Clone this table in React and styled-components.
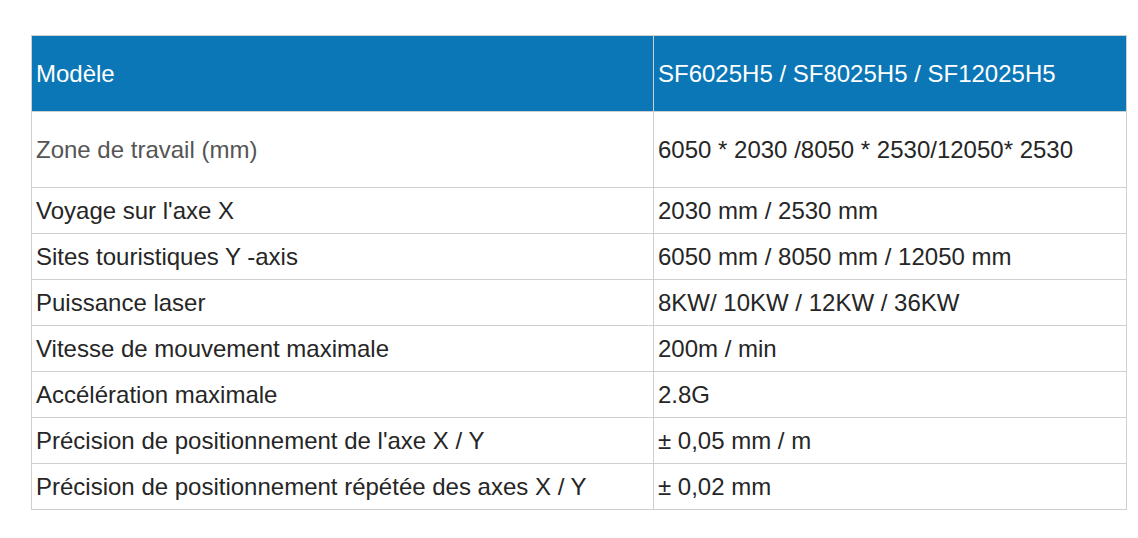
import styled, { createGlobalStyle } from 'styled-components';

const GlobalStyle = createGlobalStyle`
  html, body {
    margin: 0;
    padding: 0;
    background: #ffffff;
  }
  body {
    font-family: "Liberation Sans", Arial, sans-serif;
  }
`;

const Page = styled.div`
  padding: 35px 0 0 31px;
`;

const SpecTable = styled.table`
  width: 1095px;
  border-collapse: collapse;
  table-layout: fixed;
  font-size: 24px;
  line-height: 1.15;
  border: 1px solid #cfcfcf;
`;

const HeadCell = styled.th`
  height: 76px;
  padding: 0 4px;
  background: #0b77b7;
  color: #ffffff;
  font-weight: 400;
  text-align: left;
  vertical-align: middle;
  border: 1px solid #cfcfcf;
  box-sizing: border-box;
`;

const Cell = styled.td`
  height: ${(p) => (p.$tall ? '76px' : '46px')};
  padding: 0 4px;
  color: ${(p) => (p.$muted ? '#555555' : '#262626')};
  text-align: left;
  vertical-align: middle;
  border: 1px solid #cfcfcf;
  box-sizing: border-box;
  white-space: nowrap;
`;

const rows = [
  ['Zone de travail (mm)', '6050 * 2030 /8050 * 2530/12050* 2530'],
  ["Voyage sur l'axe X", '2030 mm / 2530 mm'],
  ['Sites touristiques Y -axis', '6050 mm / 8050 mm / 12050 mm'],
  ['Puissance laser', '8KW/ 10KW / 12KW / 36KW'],
  ['Vitesse de mouvement maximale', '200m / min'],
  ['Accélération maximale', '2.8G'],
  ["Précision de positionnement de l'axe X / Y", '± 0,05 mm / m'],
  ['Précision de positionnement répétée des axes X / Y', '± 0,02 mm'],
];

export default function App() {
  return (
    <>
      <GlobalStyle />
      <Page>
        <SpecTable>
          <colgroup>
            <col style={{ width: '622px' }} />
            <col style={{ width: '473px' }} />
          </colgroup>
          <thead>
            <tr>
              <HeadCell>Modèle</HeadCell>
              <HeadCell>SF6025H5 / SF8025H5 / SF12025H5</HeadCell>
            </tr>
          </thead>
          <tbody>
            {rows.map(([label, value], i) => (
              <tr key={label}>
                <Cell $tall={i === 0} $muted={i === 0}>{label}</Cell>
                <Cell $tall={i === 0}>{value}</Cell>
              </tr>
            ))}
          </tbody>
        </SpecTable>
      </Page>
    </>
  );
}
